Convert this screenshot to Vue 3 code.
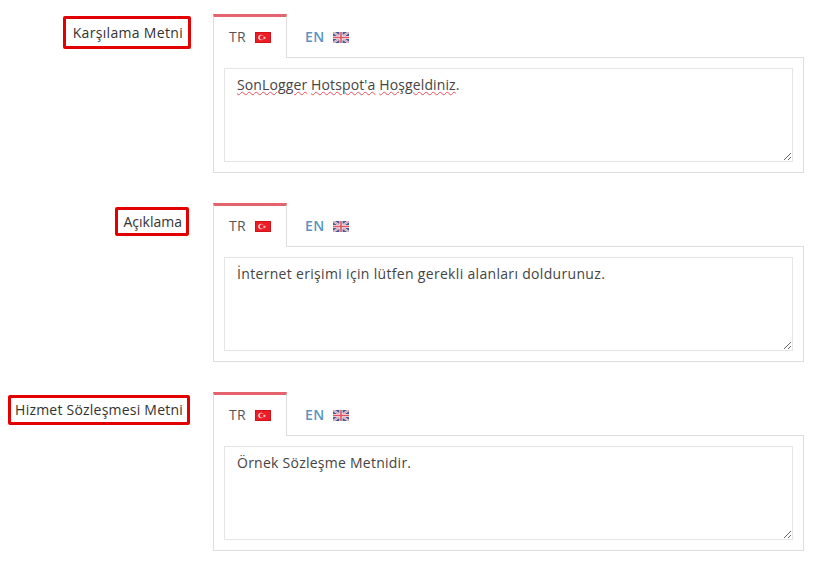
<script setup>
const rows = [
  { label: 'Karşılama Metni', cls: 'l1', text: 't1', parts: [
    { t: 'SonLogger', err: true }, { t: ' ' }, { t: "Hotspot'a", err: true }, { t: ' ' }, { t: 'Hoşgeldiniz', err: true }, { t: '.' } ] },
  { label: 'Açıklama', cls: 'l2', text: 't2', parts: [{ t: 'İnternet erişimi için lütfen gerekli alanları doldurunuz.' }] },
  { label: 'Hizmet Sözleşmesi Metni', cls: 'l3', text: 't3', parts: [{ t: 'Örnek Sözleşme Metnidir.' }] },
]
</script>

<template>
  <div class="page">
    <div v-for="row in rows" :key="row.label" class="row">
      <div class="label-col">
        <span class="label" :class="row.cls">{{ row.label }}</span>
      </div>
      <div class="field">
        <div class="tabs">
          <div class="tab active">
            <span class="code">TR</span>
            <svg class="flag" viewBox="0 0 16 11" width="16" height="11">
              <rect width="16" height="11" fill="#ee1c25" />
              <rect x=".5" y=".5" width="15" height="10" fill="none" stroke="#d0141c" />
              <circle cx="6" cy="5.5" r="2.8" fill="#fbdcdc" />
              <circle cx="6.9" cy="5.5" r="2.2" fill="#ee1c25" />
              <path d="M9.4 4.3l.4 .9 1-.1-.6 .8 .6 .8-1-.1-.4 .9-.4-.9-1 .1 .6-.8-.6-.8 1 .1z" fill="#fbdcdc" />
            </svg>
          </div>
          <div class="tab">
            <span class="code en">EN</span>
            <svg class="flag" viewBox="0 0 16 11" width="16" height="11">
              <rect width="16" height="11" fill="#4a5592" />
              <path d="M0 0L16 11M16 0L0 11" stroke="#e6e6ee" stroke-width="2.2" />
              <path d="M0 0L16 11M16 0L0 11" stroke="#d8707c" stroke-width="0.7" />
              <path d="M8 0V11M0 5.5H16" stroke="#f4f0f2" stroke-width="3.2" />
              <path d="M8 0V11M0 5.5H16" stroke="#e0525f" stroke-width="1.6" />
            </svg>
          </div>
        </div>
        <div class="panel">
          <div class="textarea" :class="row.text" role="textbox" aria-multiline="true">
            <template v-for="(p, i) in row.parts" :key="i"><span :class="{ err: p.err }">{{ p.t }}</span></template>
          </div>
        </div>
      </div>
    </div>
  </div>
</template>

<style>
html, body { margin: 0; background: #fff; }
</style>

<style scoped>
.page {
  width: 814px;
  height: 564px;
  box-sizing: border-box;
  padding-top: 14px;
  display: flex;
  flex-direction: column;
  gap: 30px;
  font-family: "Open Sans", "Noto Sans", sans-serif;
  font-size: 14px;
  color: #333;
  overflow: hidden;
  background: #fff;
}
.row {
  display: flex;
  height: 159px;
}
.label-col {
  width: 191px;
  flex: none;
  display: flex;
  justify-content: flex-end;
  align-items: flex-start;
}
.label {
  box-sizing: border-box;
  border: 3px solid #e30000;
  border-radius: 2px;
  white-space: nowrap;
}
.l1 { margin-top: 2px; height: 33px; line-height: 27px; padding: 0 5px 0 7px; letter-spacing: 0.32px; }
.l2 { margin-top: 4px; margin-right: 2px; height: 29px; line-height: 23px; padding: 0 4px 0 5px; }
.l3 { margin-top: 3px; margin-right: 1px; height: 30px; line-height: 24px; padding: 0 4px 0 4px; letter-spacing: 0.22px; }
.field {
  margin-left: 22px;
  width: 591px;
  flex: none;
  display: flex;
  flex-direction: column;
}
.tabs {
  display: flex;
  height: 44px;
  flex: none;
  margin-bottom: -1px;
  position: relative;
}
.tab {
  box-sizing: border-box;
  display: flex;
  align-items: center;
  gap: 9px;
  padding: 3px 18px 0;
  height: 44px;
  width: 74px;
  color: #555;
  letter-spacing: 0.32px;
}
.code { margin-bottom: 2px; }
.tab.active {
  padding: 0 0 0 15px;
  background: #fff;
  border: 1px solid #ddd;
  border-top: 3px solid #e5636c;
  border-bottom: 0;
  position: relative;
  z-index: 1;
}
.en { color: #5b94c4; font-weight: 600; }
.flag { flex: none; display: block; }
.panel {
  box-sizing: border-box;
  border: 1px solid #ddd;
  padding: 10px;
  height: 116px;
  flex: none;
}
.textarea {
  box-sizing: border-box;
  width: 569px;
  height: 94px;
  border: 1px solid #e5e5e5;
  padding: 6px 12px;
  line-height: 20px;
  color: #444;
  overflow: auto;
  resize: both;
}
.t1 { letter-spacing: 0.125px; }
.t2 { letter-spacing: 0.32px; }
.t3 { letter-spacing: 0.25px; }
.err {
  text-decoration: underline wavy #e8505a 1px;
  text-underline-offset: 1px;
}
</style>
